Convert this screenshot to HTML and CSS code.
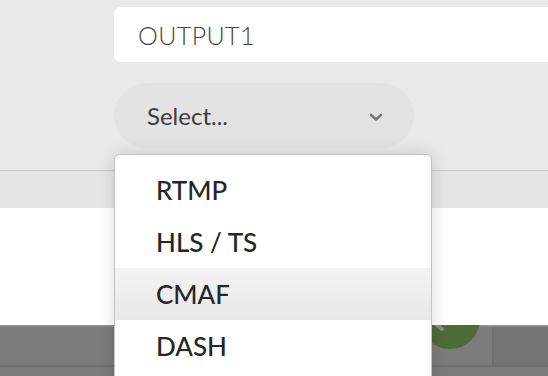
FILE: index.html
```
<!DOCTYPE html>
<html lang="en">

<head>
    <meta charset="UTF-8">
    <meta name="viewport" content="width=device-width, initial-scale=1.0">
    <title>Output settings</title>
    <link rel="stylesheet" href="styles.css">
</head>

<body>
    <div class="panel">
        <div class="name-input">OUTPUT1</div>

        <div class="select-wrap">
            <div class="select">
                <span>Select...</span>
                <svg class="chevron" width="14" height="9" viewBox="0 0 14 9">
                    <path d="M2 2 L7 6.5 L12 2" fill="none" stroke="#777" stroke-width="2.6" stroke-linecap="round" stroke-linejoin="round" />
                </svg>
            </div>

            <!-- menu opened over the rest of the page -->
            <ul class="menu">
                <li>RTMP</li>
                <li>HLS / TS</li>
                <li class="active">CMAF</li>
                <li>DASH</li>
            </ul>
        </div>
    </div>

    <div class="band"></div>
    <div class="white-area"></div>

    <div class="overlay">
        <div class="overlay-row">
            <div class="cell"></div>
            <div class="cell cell-right"></div>
            <div class="status-dot">
                <svg width="60" height="60" viewBox="0 0 60 60">
                    <path d="M12 32 L22 40" fill="none" stroke="#8a8a8a" stroke-width="4" stroke-linecap="round" />
                </svg>
            </div>
        </div>
        <div class="overlay-row"></div>
    </div>
</body>

</html>
```

FILE: styles.css
```
body {
    margin: 0;
    background-color: #e9e9e9;
    font-family: Lato, "Noto Sans", sans-serif;
    color: #333;
    overflow: hidden;
    height: 376px;
}

.panel {
    padding: 7px 0 0 114px;
    height: 163px;
    border-bottom: 1px solid #c9c9c9;
}

.name-input {
    height: 55px;
    margin-right: -10px;
    padding-left: 24px;
    background-color: #fff;
    border-radius: 7px;
    font-size: 25px;
    font-weight: 300;
    line-height: 56px;
    color: #444;
    letter-spacing: 0.4px;
}

.select-wrap {
    position: relative;
    width: 300px;
    margin-top: 21px;
}

.select {
    display: flex;
    align-items: center;
    justify-content: space-between;
    height: 65px;
    padding: 0 31px 0 33px;
    background-color: #e3e3e3;
    border-radius: 33px;
    font-size: 24px;
    color: #3d3d3d;
}

.chevron {
    margin-top: 3px;
}

.menu {
    position: absolute;
    top: 71px;
    left: 0;
    width: 316px;
    margin: 0;
    padding: 9px 0 20px;
    list-style: none;
    background-color: #fff;
    border: 1px solid #c2c2c2;
    border-radius: 6px;
    box-shadow: 0 0 18px rgba(0, 0, 0, 0.14);
    z-index: 2;
}

.menu li {
    height: 52px;
    padding-left: 41px;
    font-size: 26px;
    font-weight: 500;
    line-height: 52px;
    color: #262626;
}

.menu li.active {
    background: linear-gradient(#f3f3f3, #e8e8e8);
}

.band {
    height: 37px;
    background-color: #e6e6e6;
}

.white-area {
    height: 117px;
    background-color: #fff;
}

.overlay {
    position: relative;
    background-color: #7b7b7b;
    border-top: 2px solid #8f8f8f;
    height: 60px;
}

.overlay-row {
    display: flex;
    height: 38px;
    border-bottom: 2px solid #6f6f6f;
}

.cell {
    flex: 1;
}

.cell-right {
    flex: 0 0 54px;
    border-left: 2px solid #6e6e6e;
    background-color: #747474;
}

.status-dot {
    position: absolute;
    left: 420px;
    top: -2px;
    width: 60px;
    height: 24px;
    overflow: hidden;
}

.status-dot svg {
    display: block;
    margin-top: -36px;
    border-radius: 50%;
    background-color: #4d6b35;
}
```
